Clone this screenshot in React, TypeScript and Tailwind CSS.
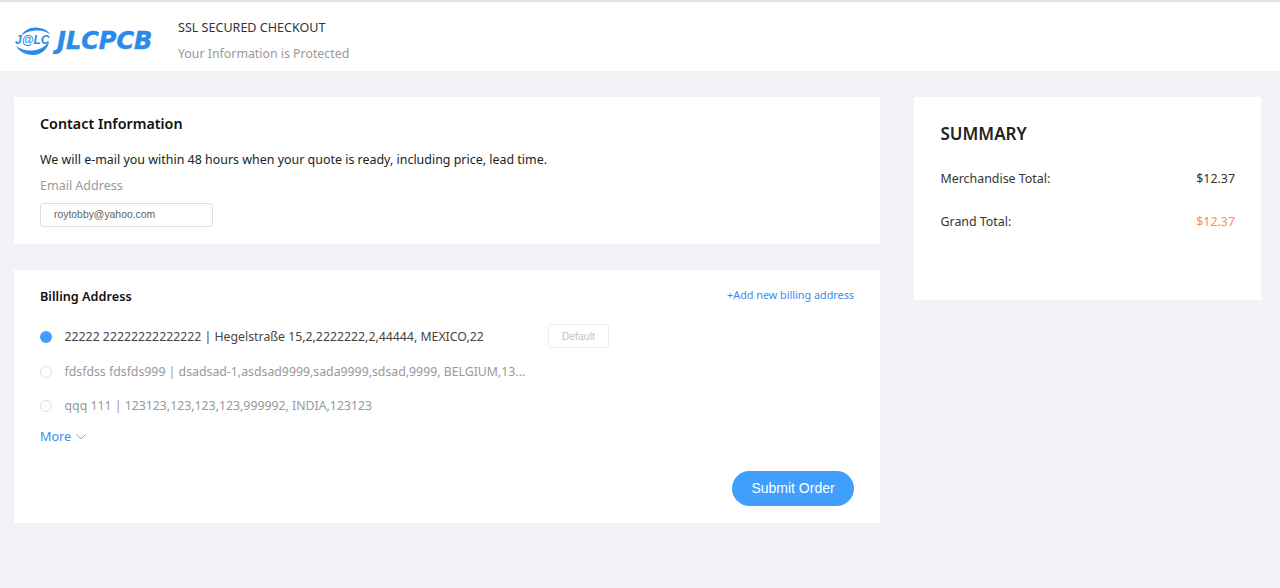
const font = "font-['Noto_Sans',sans-serif]";

const addresses = [
  { text: "22222 22222222222222 | Hegelstraße 15,2,2222222,2,44444, MEXICO,22", active: true },
  { text: "fdsfdss fdsfds999 | dsadsad-1,asdsad9999,sada9999,sdsad,9999, BELGIUM,13...", active: false },
  { text: "qqq 111 | 123123,123,123,123,999992, INDIA,123123", active: false },
];

const Logo = () => (
  <div className="flex items-center">
    <svg width="40" height="30" viewBox="0 0 40 30" className="shrink-0">
      <path d="M7 10 C10 3 19 0 26 2 C31 3 34 5 36 8 C31 5 26 4 21 4.500 C15 5 10 7 7 10 Z" fill="#2b8bea" />
      <path d="M2 20 C6 23 12 25 18 24.500 C25 24 31 21 35 16 C34 23 27 29 19 29 C11 29 5 25 2 20 Z" fill="#2b8bea" />
      <text x="1" y="18" fontSize="12" fontWeight="700" fontStyle="italic" fill="#2b8bea" fontFamily="'Liberation Sans', sans-serif">
        J@LC
      </text>
    </svg>
    <span className="ml-[3px] font-['DejaVu_Sans',sans-serif] text-[24px] leading-none font-bold italic text-[#2b8bea] [-webkit-text-stroke:0.5px_#2b8bea]">
      JLCPCB
    </span>
  </div>
);

export default function App() {
  return (
    <div className={`min-h-[588px] bg-[#f1f3f7] ${font}`}>
      <header className="flex h-[71px] border-t-2 border-[#e2e2e2] bg-white pl-[14px]">
        <div className="mt-[24px] w-[164px] shrink-0">
          <Logo />
        </div>
        <div className="pt-[16px] leading-[20px]">
          <p className="text-[12.550px] text-[#333]">SSL SECURED CHECKOUT</p>
          <p className="mt-[6px] text-[12.350px] text-[#999]">Your Information is Protected</p>
        </div>
      </header>

      <main className="flex items-start gap-[34px] pt-[26px] pl-[14px]">
        <div className="flex w-[866px] flex-col gap-[26px]">
          <section className="h-[147px] bg-white px-[26px] pt-[17px]">
            <h2 className="text-[14.300px] leading-[20px] font-semibold text-[#111]">Contact Information</h2>
            <p className="mt-[16px] text-[12.450px] leading-[20px] text-[#222]">
              We will e-mail you within 48 hours when your quote is ready, including price, lead time.
            </p>
            <p className="mt-[6px] text-[12.500px] leading-[20px] text-[#999]">Email Address</p>
            <div className="mt-[7px] flex h-[24px] w-[173px] items-center rounded-[3px] border border-[#dcdfe6] pl-[13px] font-['Liberation_Sans',sans-serif] text-[10.400px] text-[#606266]">
              roytobby@yahoo.com
            </div>
          </section>

          <section className="h-[253px] bg-white px-[26px] pt-[16px]">
            <div className="flex items-center justify-between">
              <h2 className="text-[12.700px] leading-[20px] font-semibold text-[#111]">Billing Address</h2>
              <a className="-translate-y-[1px] text-[10.800px] leading-[16px] text-[#3d8bf0]">+Add new billing address</a>
            </div>
            <ul className="mt-[21px] flex flex-col gap-[14.500px]">
              {addresses.map((a) => (
                <li key={a.text} className="flex h-[20px] items-center text-[12.300px] leading-[20px]">
                  {a.active ? (
                    <span className="h-[12px] w-[12px] shrink-0 rounded-full bg-[#409eff]" />
                  ) : (
                    <span className="h-[12px] w-[12px] shrink-0 rounded-full border border-[#dcdfe6] bg-white" />
                  )}
                  <span className={`ml-[12.500px] whitespace-nowrap ${a.active ? "text-[#444]" : "text-[#999]"}`}>{a.text}</span>
                  {a.active && (
                    <span className="ml-[64px] flex h-[24px] w-[61px] -translate-y-[1px] items-center justify-center rounded-[2px] border border-[#ebeef5] font-['Liberation_Sans',sans-serif] text-[10.500px] text-[#c0c4cc]">
                      Default
                    </span>
                  )}
                </li>
              ))}
            </ul>
            <div className="mt-[11px] flex items-center text-[12.600px] leading-[20px] text-[#3d8bf0]">
              More
              <svg width="10" height="6" viewBox="0 0 10 6" fill="none" stroke="#9aa0ab" strokeWidth="1" className="ml-[5px]">
                <path d="M0.500 0.500 L5 5 L9.500 0.500" />
              </svg>
            </div>
            <div className="mt-[24px] flex justify-end">
              <button className="h-[35px] w-[122px] rounded-full bg-[#409eff] font-['Liberation_Sans',sans-serif] text-[14px] text-white">
                Submit Order
              </button>
            </div>
          </section>
        </div>

        <aside className="h-[203px] w-[347px] bg-white pt-[25px] pr-[26px] pl-[26.500px]">
          <h2 className="text-[17px] leading-[24px] font-semibold text-[#222]">SUMMARY</h2>
          <div className="mt-[23px] flex justify-between text-[12.400px] leading-[20px] text-[#333]">
            <span>Merchandise Total:</span>
            <span>$12.37</span>
          </div>
          <div className="mt-[23px] flex justify-between text-[12.400px] leading-[20px] text-[#333]">
            <span>Grand Total:</span>
            <span className="text-[#ff8c4d]">$12.37</span>
          </div>
        </aside>
      </main>
    </div>
  );
}
